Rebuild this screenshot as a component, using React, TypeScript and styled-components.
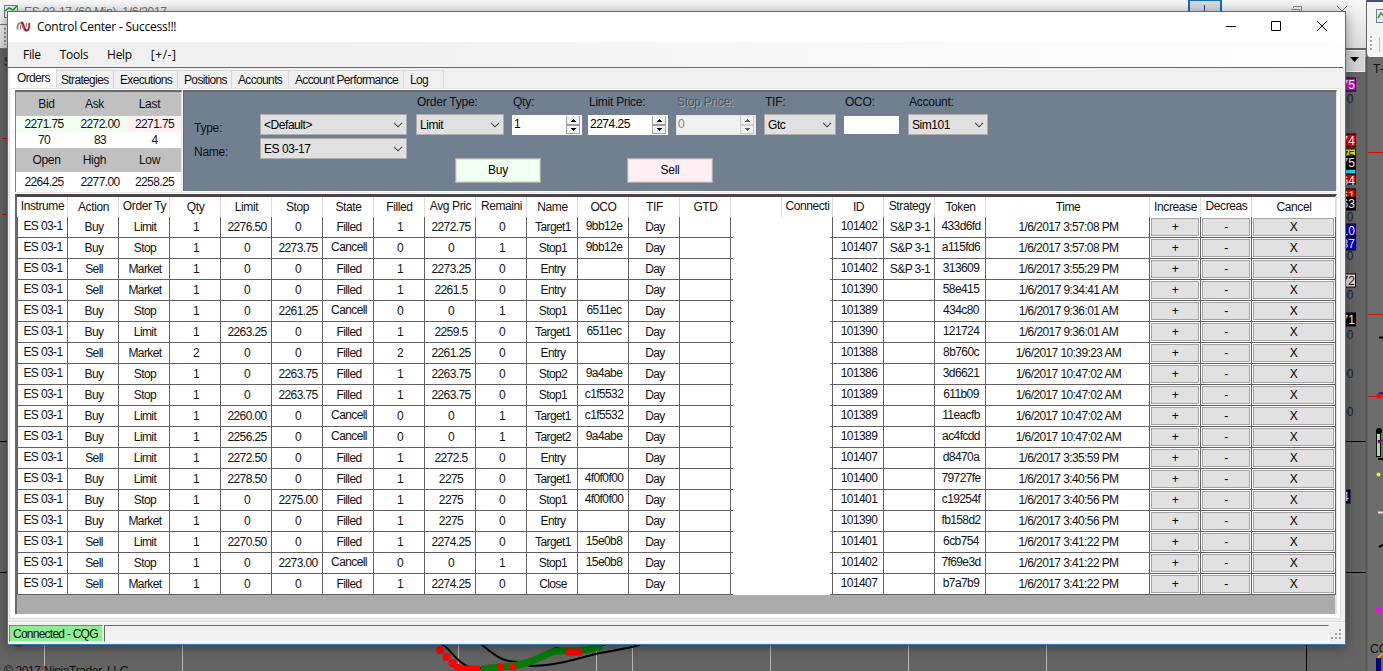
import React from 'react';
import styled, { createGlobalStyle } from 'styled-components';

const GlobalStyle = createGlobalStyle`
  * { box-sizing: border-box; }
  html, body { margin: 0; padding: 0; overflow: hidden; }
  body { font-family: "Liberation Sans", Arial, sans-serif; font-size: 12px; letter-spacing: -0.6px; color: #111; }
`;

const Desktop = styled.div`
  position: relative;
  width: 1383px;
  height: 671px;
  overflow: hidden;
  background: #646464;
`;

const Backdrop = styled.svg`
  position: absolute;
  inset: 0;
`;

const AppWindow = styled.div`
  position: absolute;
  left: 7px;
  top: 11px;
  width: 1339px;
  height: 634px;
  border: 1px solid #2f79b5;
  background: #f0f0f0;
  box-shadow: 0 2px 12px rgba(0, 0, 0, 0.4);
  display: flex;
  flex-direction: column;
`;

const TitleBar = styled.div`
  height: 30px;
  flex: none;
  background: #fff;
  display: flex;
  align-items: center;
  padding: 0 0 1px 8px;
`;

const Title = styled.div`
  flex: 1;
  margin-left: 6px;
  font: 12px "Open Sans", "Noto Sans", sans-serif;
  letter-spacing: -0.23px;
  color: #000;
`;

const WindowButtons = styled.svg`
  margin: 0 17px 1px 0;
`;

const MenuBar = styled.div`
  height: 25px;
  flex: none;
  display: flex;
  align-items: center;
  padding: 0 0 1px 15px;
  gap: 19px;
  background: linear-gradient(90deg, #f0f0f0 0%, #f1f1f1 28%, #fbfbfb 75%, #fdfdfd 100%);
  font: 12px "Open Sans", "Noto Sans", sans-serif;
  color: #000;
`;

const MenuItem = styled.div<{ $spacing?: number }>`
  letter-spacing: ${p => p.$spacing ?? -0.3}px;
`;

const TabArea = styled.div`
  height: 554px;
  flex: none;
  margin: 0 2px 0 0;
  border-top: 1px solid #696969;
  padding-left: 1px;
  display: flex;
  flex-direction: column;
  background: #f0f0f0;
`;

const TabStrip = styled.div`
  height: 20px;
  flex: none;
  display: flex;
  align-items: flex-end;
  padding-left: 1px;
`;

const Tab = styled.div<{ $width: number; $active?: boolean; $indent?: number }>`
  width: ${p => p.$width}px;
  height: ${p => (p.$active ? 20 : 18)}px;
  line-height: ${p => (p.$active ? 19 : 18)}px;
  padding-left: ${p => p.$indent ?? 6}px;
  white-space: nowrap;
  background: ${p => (p.$active ? '#fff' : '#f0f0f0')};
  border-right: 1px solid #d9d9d9;
  border-top: 1px solid ${p => (p.$active ? '#fff' : '#d9d9d9')};
  letter-spacing: -0.65px;
`;

const TabPage = styled.div`
  flex: 1;
  margin-right: 2px;
  border: 1px solid #dcdcdc;
  border-top-color: #e4e4e4;
  background: #fff;
  padding: 1px 3px 4px 5px;
  margin-bottom: 3px;
`;

const TopRow = styled.div`
  display: flex;
  gap: 1px;
  height: 103px;
  border-bottom: 1px solid #e8e8e8;
`;

const QuotePanel = styled.div`
  width: 167px;
  height: 102px;
  border: 1px solid #808080;
  border-top: 2px solid #696969;
  border-right-color: #e3e3e3;
  border-bottom: 0;
`;

const QuoteRow = styled.div<{ $height: number; $head?: boolean; $tint?: boolean }>`
  display: grid;
  grid-template-columns: ${p => (p.$head ? '61px 35px 75px' : '56px 56px 53px')};
  height: ${p => p.$height}px;
  line-height: ${p => p.$height}px;
  background: ${p => (p.$tint ? 'linear-gradient(90deg,#f0fff0 0 112px,#fff0f5 112px)' : p.$head ? '#c0c0c0' : '#fff')};
  letter-spacing: ${p => (p.$head ? -0.3 : -0.6)}px;
  text-align: center;
  white-space: nowrap;
`;

const OrderPanel = styled.div`
  flex: 1;
  height: 101px;
  background: #708090;
  border-top: 2px solid #696969;
  border-left: 1px solid #696969;
  border-right: 1px solid #e3e3e3;
  display: flex;
  color: #0c0f14;
`;

const SideLabels = styled.div`
  width: 66px;
  margin-left: 10px;
  padding-top: 24px;
  line-height: 24px;
  letter-spacing: -0.25px;
`;

const ComboStack = styled.div`
  width: 147px;
  padding-top: 22px;
  display: flex;
  flex-direction: column;
  gap: 3px;
`;

const ComboBox = styled.div`
  height: 21px;
  width: 100%;
  border: 1px solid #adadad;
  background: #e1e1e1;
  color: #000;
  display: flex;
  align-items: center;
  justify-content: space-between;
  padding: 0 3px;
  letter-spacing: -0.45px;
`;

const Entry = styled.div`
  margin-left: 9px;
`;

const FieldRow = styled.div`
  display: flex;
`;

const Field = styled.div<{ $width: number; $gap: number; $off?: boolean }>`
  width: ${p => p.$width}px;
  margin-right: ${p => p.$gap}px;
  > label {
    display: block;
    height: 22px;
    line-height: 21px;
    padding-left: 1px;
    white-space: nowrap;
    letter-spacing: -0.25px;
    color: ${p => (p.$off ? '#4b5660' : 'inherit')};
    text-shadow: ${p => (p.$off ? '1px 1px 0 #a4aeb8' : 'none')};
  }
`;

const NumberBox = styled.div<{ $off?: boolean }>`
  height: 20px;
  margin-top: 1px;
  background: ${p => (p.$off ? '#f0f0f0' : '#fff')};
  border: 1px solid ${p => (p.$off ? '#e3e3e3' : '#fff')};
  color: ${p => (p.$off ? '#808080' : '#000')};
  display: flex;
  justify-content: space-between;
  padding: 0 1px 0 1px;
  line-height: 16px;
  letter-spacing: -0.5px;
`;

const TextBox = styled.div`
  margin-top: 2px;
  height: 18px;
  background: #fff;
`;

const ButtonRow = styled.div`
  display: flex;
  gap: 86px;
  padding: 23px 0 0 39px;
`;

const OrderButton = styled.div<{ $color: string }>`
  width: 86px;
  height: 25px;
  line-height: 22px;
  text-align: center;
  border: 1px solid #adadad;
  box-shadow: inset 0 0 0 1px #e1e1e1;
  background: ${p => p.$color};
  color: #000;
  letter-spacing: -0.3px;
`;

const Grid = styled.div`
  margin-top: 1px;
  height: 420px;
  border-top: 3px solid #4a4448;
  border-left: 2px solid #696969;
  border-right: 2px solid #e3e3e3;
  background: #ababab;
`;

const GridRow = styled.div<{ $head?: boolean }>`
  display: grid;
  grid-template-columns: repeat(14, 51px) 51px 51px repeat(3, 51px) 164px 51px 51px 84px;
  grid-template-rows: 100%;
  width: 1319px;
  height: ${p => (p.$head ? 20 : 21)}px;
  background: #fff;
`;

const HeadCell = styled.div<{ $raised?: boolean }>`
  border-right: 1px solid #dedede;
  text-align: center;
  white-space: nowrap;
  line-height: ${p => (p.$raised ? 19 : 21)}px;
  padding-left: 1px;
  letter-spacing: -0.4px;
`;

const Cell = styled.div<{ $raised?: boolean; $first?: boolean }>`
  border-right: 1px solid #645f64;
  border-bottom: 1px solid #645f64;
  border-left: ${p => (p.$first ? '1px solid #645f64' : '0')};
  text-align: center;
  white-space: nowrap;
  line-height: ${p => (p.$raised ? 19 : 21)}px;
  padding-left: ${p => (p.$first ? 1 : 2)}px;
`;

const Erased = styled.div<{ $side: 'left' | 'right' }>`
  background: linear-gradient(#645f64, #645f64) ${p => (p.$side === 'left' ? '0' : '100%')} 100% / 2px 1px no-repeat #fff;
  border-right: ${p => (p.$side === 'right' ? '1px solid #645f64' : '0')};
`;

const ButtonCell = styled(Cell)`
  padding: 1px;
  background: #fff;
`;

const GridButton = styled.div`
  height: 18px;
  border: 1px solid #a4a4a4;
  background: #e1e1e1;
  line-height: 17px;
  text-align: center;
  color: #000;
`;

const StatusBar = styled.div`
  flex: 1;
  display: flex;
  align-items: flex-start;
  padding: 3px 2px 0 1px;
  border-top: 1px solid #d5d5d5;
  box-shadow: inset 0 1px 0 #fff;
`;

const Connection = styled.div`
  width: 94px;
  height: 17px;
  border: 1px solid #6d8b6d;
  border-right-color: #d7f3d7;
  border-bottom-color: #d7f3d7;
  background: #90ee90;
  line-height: 16px;
  padding-left: 3px;
  white-space: nowrap;
  letter-spacing: -0.75px;
`;

const StatusPanel = styled.div`
  flex: 1;
  height: 17px;
  margin-left: 1px;
  border-top: 1px solid #696969;
  border-left: 1px solid #696969;
  border-right: 1px solid #fff;
  border-bottom: 1px solid #fff;
`;

const Grip = styled.svg`
  margin: 4px 1px 0 2px;
`;

const Chevron = () => (
  <svg width="10" height="6" viewBox="0 0 10 6"><path d="M1 .8 5 4.8 9 .8" fill="none" stroke="#444" strokeWidth="1.1" /></svg>
);

const Spinner = ({ off }: { off?: boolean }) => {
  const ink = off ? '#666' : '#000';
  return (
    <svg width="14" height="18" viewBox="0 0 14 18" shapeRendering="crispEdges">
      <path d="M.5 0V8.500H13.500V0M.5 9.500H13.500V17.500H.5Z" fill="#f0f0f0" stroke={off ? '#ccc' : '#a0a0a0'} />
      <path d="M7 3h1v1h1v1h1v1H5V5h1V4h1ZM5 12h5v1H9v1H8v1H7v-1H6v-1H5Z" fill={ink} />
    </svg>
  );
};

const Combo = ({ value }: { value: string }) => (
  <ComboBox><span>{value}</span><Chevron /></ComboBox>
);

const TABS: [string, number, number][] = [
  ['Strategies', 57, 4], ['Executions', 64, 6], ['Positions', 54, 6], ['Accounts', 57, 6], ['Account Performance', 115, 6], ['Log', 40, 6],
];

const HEADERS = ['Instrume', 'Action', 'Order Ty', 'Qty', 'Limit', 'Stop', 'State', 'Filled', 'Avg Pric', 'Remaini', 'Name', 'OCO', 'TIF', 'GTD', '', 'Connecti', 'ID', 'Strategy', 'Token', 'Time', 'Increase', 'Decreas', 'Cancel'];
const RAISED_HEADERS = ['Instrume', 'Order Ty', 'Avg Pric', 'Remaini', 'Connecti', 'Strategy', 'Decreas'];

// action|type|qty|limit|stop|state|filled|avg|remaining|name|oco|id|strategy|token|time
const ORDERS = `Buy|Limit|1|2276.50|0|Filled|1|2272.75|0|Target1|9bb12e|101402|S&P 3-1|433d6fd|3:57:08 PM
Buy|Stop|1|0|2273.75|Cancell|0|0|1|Stop1|9bb12e|101407|S&P 3-1|a115fd6|3:57:08 PM
Sell|Market|1|0|0|Filled|1|2273.25|0|Entry||101402|S&P 3-1|313609|3:55:29 PM
Sell|Market|1|0|0|Filled|1|2261.5|0|Entry||101390||58e415|9:34:41 AM
Buy|Stop|1|0|2261.25|Cancell|0|0|1|Stop1|6511ec|101389||434c80|9:36:01 AM
Buy|Limit|1|2263.25|0|Filled|1|2259.5|0|Target1|6511ec|101390||121724|9:36:01 AM
Sell|Market|2|0|0|Filled|2|2261.25|0|Entry||101388||8b760c|10:39:23 AM
Buy|Stop|1|0|2263.75|Filled|1|2263.75|0|Stop2|9a4abe|101386||3d6621|10:47:02 AM
Buy|Stop|1|0|2263.75|Filled|1|2263.75|0|Stop1|c1f5532|101389||611b09|10:47:02 AM
Buy|Limit|1|2260.00|0|Cancell|0|0|1|Target1|c1f5532|101389||11eacfb|10:47:02 AM
Buy|Limit|1|2256.25|0|Cancell|0|0|1|Target2|9a4abe|101389||ac4fcdd|10:47:02 AM
Sell|Limit|1|2272.50|0|Filled|1|2272.5|0|Entry||101407||d8470a|3:35:59 PM
Buy|Limit|1|2278.50|0|Filled|1|2275|0|Target1|4f0f0f00|101400||79727fe|3:40:56 PM
Buy|Stop|1|0|2275.00|Filled|1|2275|0|Stop1|4f0f0f00|101401||c19254f|3:40:56 PM
Buy|Market|1|0|0|Filled|1|2275|0|Entry||101390||fb158d2|3:40:56 PM
Sell|Limit|1|2270.50|0|Filled|1|2274.25|0|Target1|15e0b8|101401||6cb754|3:41:22 PM
Sell|Stop|1|0|2273.00|Cancell|0|0|1|Stop1|15e0b8|101402||7f69e3d|3:41:22 PM
Sell|Market|1|0|0|Filled|1|2274.25|0|Close||101407||b7a7b9|3:41:22 PM`.split('\n').map(l => l.split('|'));

const OrderRow = ({ order }: { order: string[] }) => {
  const time = '1/6/2017 ' + order[14];
  return (
    <GridRow>
      <Cell $raised $first>ES 03-1</Cell>
      {order.slice(0, 10).map((v, i) => <Cell key={i} $raised={v === 'Cancell'}>{v}</Cell>)}
      <Cell $raised>{order[10]}</Cell>
      <Cell>Day</Cell>
      <Cell />
      <Erased $side="left" />
      <Erased $side="right" />
      <Cell $raised>{order[11]}</Cell>
      <Cell>{order[12]}</Cell>
      <Cell $raised>{order[13]}</Cell>
      <Cell>{time}</Cell>
      {['+', '-', 'X'].map(s => <ButtonCell key={s}><GridButton>{s}</GridButton></ButtonCell>)}
    </GridRow>
  );
};

const TAGS: [number, number, string, string, string][] = [
  [78, 13, '#c414c4', '#fff', '75'], [134, 13, '#e00000', '#fff', '74'], [149, 9, '#e3e32a', '#222', '75'],
  [169, 6, '#20d8e8', '#222', ''], [174, 10, '#e00000', '#fff', '64'], [189, 9, '#e00000', '#fff', '61'],
  [156, 13, '#000', '#fff', '75'], [197, 13, '#000', '#fff', '63'], [224, 13, '#0000c4', '#fff', '10'],
  [237, 13, '#0000c4', '#fff', '87'], [274, 13, '#e8e0dc', '#111', '72'], [313, 13, '#000', '#fff', '71'],
];

const Scene = () => (
  <Backdrop width="1383" height="671" viewBox="0 0 1383 671" fontSize="12" letterSpacing="0">
    <defs>
      <linearGradient id="bar" x2="0" y2="1"><stop offset="0" stopColor="#f8f8f8" /><stop offset="1" stopColor="#dcdcdc" /></linearGradient>
    </defs>
    <rect width="1366" height="48" fill="url(#bar)" />
    <path d="M0 24.500H7M1 48.500H7" stroke="#777" />
    <path d="M5 28V45" stroke="#999" strokeWidth="2" strokeDasharray="2 2" />
    <rect x="4.500" y="5.500" width="13" height="12" fill="#e5f1e5" stroke="#68829c" />
    <path d="M5 11 9 8 13 10 17 6" fill="none" stroke="#24963a" strokeWidth="1.500" />
    <text x="24" y="16" fill="#777" letterSpacing="-.3">ES 03-17 (60 Min)&#160; 1/6/2017</text>
    <path d="M1189 12V0H1221V12" fill="#d7dbe2" stroke="#1670bd" strokeWidth="2" />
    <path d="M1204.500 5V12" stroke="#244a82" />
    <path d="M1291.500 9.500H1299.500V17M1293.500 8V6.500H1301.500V12" fill="none" stroke="#888" />
    <path d="M1337 6 1346 15M1347 6 1338 15" stroke="#777" />
    <text x="4" y="66" fill="#111">S</text>
    <path d="M2 138.500H7M2 214.500H7" stroke="#c01010" />
    <path d="M0 441.500H7M0 572.500H7M1346 441.500H1367M1346 572.500H1367M1367 631.500H1383M1306.500 645V671" stroke="#000" />
    <path d="M44.500 645V671M182.500 645V671M458.500 645V671M596.500 645V671M632.500 645V671M770.500 645V671M908.500 645V671M1046.500 645V671" stroke="#b4b4b4" />
    <path d="M12 644Q18 650 24 645" fill="#d01020" />
    <text x="4" y="675" fill="#111" letterSpacing="-.37">© 2017 NinjaTrader, LLC</text>
    <path d="M436 644C448 640 454 665 474 668C495 670 520 667 556 648C575 652 590 650 606 644M481 644C500 660 505 662 522 662M528 666C560 666 585 656 600 653C615 650 625 649 640 645" fill="none" stroke="#000" strokeWidth="2" />
    <path d="M481 669C500 667 518 667 532 661L552 652C562 648 575 655 602 646" fill="none" stroke="#087a08" strokeWidth="7" />
    <path d="M440 650h.1M446.500 657h.1M452.500 663h.1M458 668h.1" stroke="red" strokeWidth="8" strokeLinecap="round" />
    <path d="M456 669H480M498 667H503M510 667H516M565 652H582" stroke="red" strokeWidth="7" />

    <rect x="1340" y="50.500" width="25" height="21" fill="#d4d4d4" stroke="#eee" />
    <path d="M1350 57H1359L1354.500 62Z" fill="#000" />
    {[99, 217, 256, 295, 335, 374, 412].map(y => <text key={y} x="1340" y={y + 4} fill="#202020">00</text>)}
    {TAGS.map(([y, h, bg, fg, label]) => (
      <g key={y}>
        <rect x="1340" y={y} width="15.500" height={h} fill={bg} stroke="#000" />
        <text x="1341.500" y={y + 11} fill={fg}>{label}</text>
      </g>
    ))}
    <rect x="1340" y="490" width="10" height="13" fill="#000070" stroke="#000" />
    <text x="1342" y="501" fill="#fff">4</text>

    <rect x="1367" y="0" width="16" height="671" fill="#6c6c6c" />
    <path d="M1366.500 57V671" stroke="#575757" strokeWidth="2" />
    <path d="M1367 0H1383V57H1370Q1367 57 1367 52Z" fill="#f4f4f4" />
    <rect x="1367" width="16" height="2" fill="#4a4f70" />
    <rect x="1376.500" y="9.500" width="13" height="13" fill="#e5f1e5" stroke="#68829c" />
    <path d="M1378 18 1381 13 1385 17" fill="none" stroke="#24963a" strokeWidth="1.500" />
    <path d="M1371 36V51" stroke="#aaa" strokeWidth="2" strokeDasharray="2 2" />
    <path d="M1379.500 37V52" stroke="#bbb" />
    <text x="1373" y="73" fill="#111">T-</text>
    <path d="M1368 152.500H1383M1368 314.500H1383M1368 396.500H1383" stroke="#d01010" />
    <path d="M1379 337.500H1383" stroke="#000" strokeWidth="2" />
    <path d="M1378 395Q1381 391 1384 395" fill="none" stroke="#1414b8" strokeWidth="2" />
    <circle cx="1379" cy="396" r="2.500" fill="red" />
    <rect x="1376.500" y="432.500" width="4" height="24" fill="#98e898" stroke="#000" />
    <circle cx="1379" cy="431" r="3" fill="#000" />
    <path d="M1378 441H1383M1378 459H1383" stroke="#000" strokeWidth="2" />
    <path d="M1378 443 1383 440" stroke="#9c149c" strokeWidth="2" />
    <circle cx="1378.500" cy="474.500" r="2" fill="#f4f420" />
    <path d="M1378 512.500H1383" stroke="#e8dcdc" strokeWidth="2" />
    <path d="M1379 547 1383 545" stroke="#000" strokeWidth="2" />
    <circle cx="1379" cy="610" r="3" fill="#f0f" />
    <text x="1370" y="653" fill="#111">CCI</text>
    <rect x="1376" y="658" width="5" height="13" fill="#000080" />
    <path d="M1378 658 1383 653" stroke="#f4a020" strokeWidth="2" />
  </Backdrop>
);

const App: React.FC = () => (
  <>
    <GlobalStyle />
    <Desktop>
      <Scene />
      <AppWindow>
        <TitleBar>
          <svg width="15" height="12" viewBox="0 0 15 12" fill="none">
            <path d="M1.500 8.500C1 3 4 .5 6 3L8.500 9Q9.500 10.500 10.300 8" stroke="#a18b85" strokeWidth="2" />
            <path d="M5 1.500Q6.800 1 7.700 4.500L9.200 8.500C11 11.500 14 8 13.200 2" stroke="#b21f2d" strokeWidth="1.900" />
            <path d="M4.500 4V8.500M10.500 2V6" stroke="#9c6a64" strokeWidth="1" />
          </svg>
          <Title>Control Center - Success!!!</Title>
          <WindowButtons width="102" height="12" viewBox="0 0 102 12" fill="none" stroke="#000">
            <path d="M0 6.500H10M45.500 1.500H54.500V10.500H45.500ZM91 1 101 11M101 1 91 11" />
          </WindowButtons>
        </TitleBar>
        <MenuBar>
          <MenuItem>File</MenuItem>
          <MenuItem>Tools</MenuItem>
          <MenuItem>Help</MenuItem>
          <MenuItem $spacing={0.5}>[+/-]</MenuItem>
        </MenuBar>
        <TabArea>
          <TabStrip>
            <Tab $width={47} $indent={7} $active>Orders</Tab>
            {TABS.map(([name, width, indent]) => <Tab key={name} $width={width} $indent={indent}>{name}</Tab>)}
          </TabStrip>
          <TabPage>
            <TopRow>
              <QuotePanel>
                <QuoteRow $height={24} $head><span>Bid</span><span>Ask</span><span>Last</span></QuoteRow>
                <QuoteRow $height={16} $tint><span>2271.75</span><span>2272.00</span><span>2271.75</span></QuoteRow>
                <QuoteRow $height={16}><span>70</span><span>83</span><span>4</span></QuoteRow>
                <QuoteRow $height={24} $head><span>Open</span><span>High</span><span>Low</span></QuoteRow>
                <QuoteRow $height={20}><span>2264.25</span><span>2277.00</span><span>2258.25</span></QuoteRow>
              </QuotePanel>
              <OrderPanel>
                <SideLabels>Type:<br />Name:</SideLabels>
                <ComboStack>
                  <Combo value="<Default>" />
                  <Combo value="ES 03-17" />
                </ComboStack>
                <Entry>
                  <FieldRow>
                    <Field $width={88} $gap={8}><label>Order Type:</label><Combo value="Limit" /></Field>
                    <Field $width={70} $gap={6}><label>Qty:</label><NumberBox>1<Spinner /></NumberBox></Field>
                    <Field $width={80} $gap={8}><label>Limit Price:</label><NumberBox>2274.25<Spinner /></NumberBox></Field>
                    <Field $width={80} $gap={8} $off><label>Stop Price:</label><NumberBox $off>0<Spinner off /></NumberBox></Field>
                    <Field $width={72} $gap={8}><label>TIF:</label><Combo value="Gtc" /></Field>
                    <Field $width={55} $gap={9}><label>OCO:</label><TextBox /></Field>
                    <Field $width={80} $gap={0}><label>Account:</label><Combo value="Sim101" /></Field>
                  </FieldRow>
                  <ButtonRow>
                    <OrderButton $color="#f0fff0">Buy</OrderButton>
                    <OrderButton $color="#fff0f5">Sell</OrderButton>
                  </ButtonRow>
                </Entry>
              </OrderPanel>
            </TopRow>
            <Grid>
              <GridRow $head>
                {HEADERS.map((h, i) => <HeadCell key={i} $raised={RAISED_HEADERS.includes(h)}>{h}</HeadCell>)}
              </GridRow>
              {ORDERS.map((o, i) => <OrderRow key={i} order={o} />)}
            </Grid>
          </TabPage>
        </TabArea>
        <StatusBar>
          <Connection>Connected - CQG</Connection>
          <StatusPanel />
          <Grip width="11" height="11" viewBox="0 0 11 11" fill="#a0a0a0">
            <path d="M8 0h2v2H8zM4 4h2v2H4zM8 4h2v2H8zM0 8h2v2H0zM4 8h2v2H4zM8 8h2v2H8z" />
          </Grip>
        </StatusBar>
      </AppWindow>
    </Desktop>
  </>
);

export default App;
